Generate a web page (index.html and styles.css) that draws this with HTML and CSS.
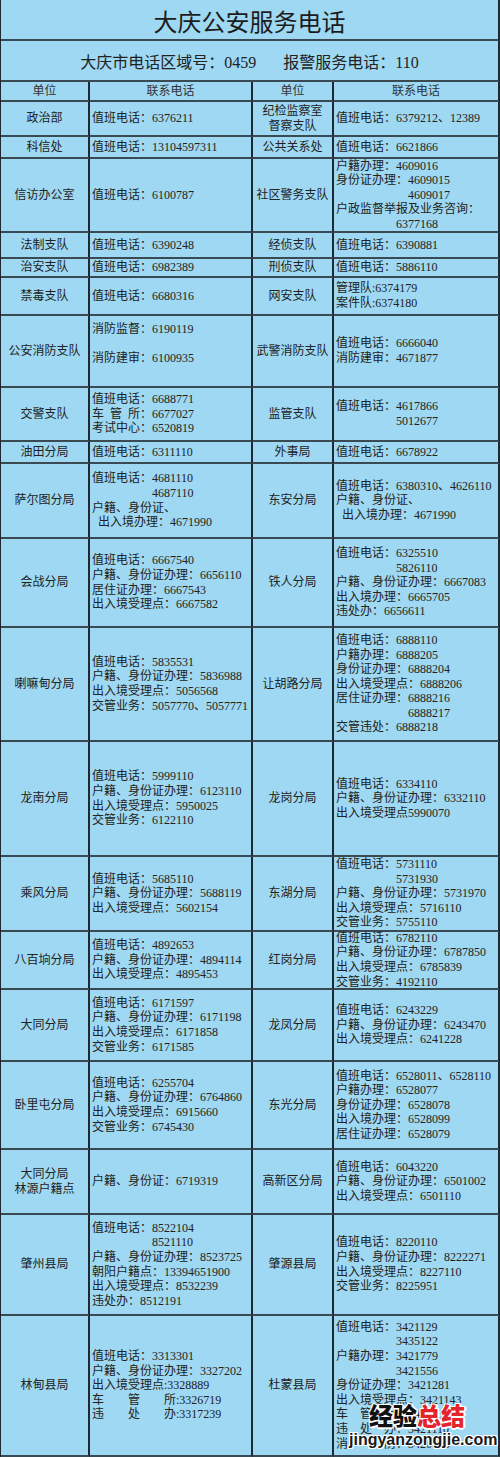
FILE: index.html
```html
<!DOCTYPE html>
<html lang="zh-CN">
<head>
<meta charset="utf-8">
<title>大庆公安服务电话</title>
<link rel="stylesheet" href="styles.css">
</head>
<body>
<div class="sheet">
  <div class="title">大庆公安服务电话</div>
  <div class="subtitle">大庆市电话区域号：0459<span class="gap"></span>报警服务电话：110</div>
  <div class="grid">
    <div class="c m hd">单位</div>
    <div class="c m hd">联系电话</div>
    <div class="c m hd">单位</div>
    <div class="c m hd">联系电话</div>

    <div class="c m">政治部</div>
    <div class="c t"><div>值班电话：6376211</div></div>
    <div class="c m"><div>纪检监察室</div><div>督察支队</div></div>
    <div class="c t"><div>值班电话：6379212、12389</div></div>

    <div class="c m">科信处</div>
    <div class="c t"><div>值班电话：13104597311</div></div>
    <div class="c m">公共关系处</div>
    <div class="c t"><div>值班电话：6621866</div></div>

    <div class="c m">信访办公室</div>
    <div class="c t"><div>值班电话：6100787</div></div>
    <div class="c m">社区警务支队</div>
    <div class="c t">
      <div>户籍办理：4609016</div>
      <div>身份证办理：4609015</div>
      <div class="i72">4609017</div>
      <div>户政监督举报及业务咨询：</div>
      <div class="i60">6377168</div>
    </div>

    <div class="c m">法制支队</div>
    <div class="c t"><div>值班电话：6390248</div></div>
    <div class="c m">经侦支队</div>
    <div class="c t"><div>值班电话：6390881</div></div>

    <div class="c m">治安支队</div>
    <div class="c t"><div>值班电话：6982389</div></div>
    <div class="c m">刑侦支队</div>
    <div class="c t"><div>值班电话：5886110</div></div>

    <div class="c m">禁毒支队</div>
    <div class="c t"><div>值班电话：6680316</div></div>
    <div class="c m">网安支队</div>
    <div class="c t"><div>管理队:6374179</div><div>案件队:6374180</div></div>

    <div class="c m">公安消防支队</div>
    <div class="c t">
      <div>消防监督：6190119</div>
      <div>&nbsp;</div>
      <div>消防建审：6100935</div>
      <div>&nbsp;</div>
    </div>
    <div class="c m">武警消防支队</div>
    <div class="c t"><div>值班电话：6666040</div><div>消防建审：4671877</div></div>

    <div class="c m">交警支队</div>
    <div class="c t">
      <div>值班电话：6688771</div>
      <div>车&ensp;管&ensp;所：6677027</div>
      <div>考试中心：6520819</div>
    </div>
    <div class="c m">监管支队</div>
    <div class="c t"><div>值班电话：4617866</div><div class="i60">5012677</div></div>

    <div class="c m">油田分局</div>
    <div class="c t"><div>值班电话：6311110</div></div>
    <div class="c m">外事局</div>
    <div class="c t"><div>值班电话：6678922</div></div>

    <div class="c m">萨尔图分局</div>
    <div class="c t">
      <div>值班电话：4681110</div>
      <div class="i60">4687110</div>
      <div>户籍、身份证、</div>
      <div class="i6">出入境办理：4671990</div>
    </div>
    <div class="c m">东安分局</div>
    <div class="c t">
      <div>值班电话：6380310、4626110</div>
      <div>户籍、身份证、</div>
      <div class="i6">出入境办理：4671990</div>
    </div>

    <div class="c m">会战分局</div>
    <div class="c t">
      <div>值班电话：6667540</div>
      <div>户籍、身份证办理：6656110</div>
      <div>居住证办理：6667543</div>
      <div>出入境受理点：6667582</div>
    </div>
    <div class="c m">铁人分局</div>
    <div class="c t">
      <div>值班电话：6325510</div>
      <div class="i60">5826110</div>
      <div>户籍、身份证办理：6667083</div>
      <div>出入境办理：6665705</div>
      <div>违处办：6656611</div>
    </div>

    <div class="c m">喇嘛甸分局</div>
    <div class="c t">
      <div>值班电话：5835531</div>
      <div>户籍、身份证办理：5836988</div>
      <div>出入境受理点：5056568</div>
      <div>交管业务：5057770、5057771</div>
    </div>
    <div class="c m">让胡路分局</div>
    <div class="c t">
      <div>值班电话：6888110</div>
      <div>户籍办理：6888205</div>
      <div>身份证办理：6888204</div>
      <div>出入境受理点：6888206</div>
      <div>居住证办理：6888216</div>
      <div class="i72">6888217</div>
      <div>交管违处：6888218</div>
    </div>

    <div class="c m">龙南分局</div>
    <div class="c t">
      <div>值班电话：5999110</div>
      <div>户籍、身份证办理：6123110</div>
      <div>出入境受理点：5950025</div>
      <div>交管业务：6122110</div>
    </div>
    <div class="c m">龙岗分局</div>
    <div class="c t">
      <div>值班电话：6334110</div>
      <div>户籍、身份证办理：6332110</div>
      <div>出入境受理点5990070</div>
    </div>

    <div class="c m">乘风分局</div>
    <div class="c t">
      <div>值班电话：5685110</div>
      <div>户籍、身份证办理：5688119</div>
      <div>出入境受理点：5602154</div>
    </div>
    <div class="c m">东湖分局</div>
    <div class="c t">
      <div>值班电话：5731110</div>
      <div class="i60">5731930</div>
      <div>户籍、身份证办理：5731970</div>
      <div>出入境受理点：5716110</div>
      <div>交管业务：5755110</div>
    </div>

    <div class="c m">八百垧分局</div>
    <div class="c t">
      <div>值班电话：4892653</div>
      <div>户籍、身份证办理：4894114</div>
      <div>出入境受理点：4895453</div>
    </div>
    <div class="c m">红岗分局</div>
    <div class="c t">
      <div>值班电话：6782110</div>
      <div>户籍、身份证办理：6787850</div>
      <div>出入境受理点：6785839</div>
      <div>交管业务：4192110</div>
    </div>

    <div class="c m">大同分局</div>
    <div class="c t">
      <div>值班电话：6171597</div>
      <div>户籍、身份证办理：6171198</div>
      <div>出入境受理点：6171858</div>
      <div>交管业务：6171585</div>
    </div>
    <div class="c m">龙凤分局</div>
    <div class="c t">
      <div>值班电话：6243229</div>
      <div>户籍、身份证办理：6243470</div>
      <div>出入境受理点：6241228</div>
    </div>

    <div class="c m">卧里屯分局</div>
    <div class="c t">
      <div>值班电话：6255704</div>
      <div>户籍、身份证办理：6764860</div>
      <div>出入境受理点：6915660</div>
      <div>交管业务：6745430</div>
    </div>
    <div class="c m">东光分局</div>
    <div class="c t">
      <div>值班电话：6528011、6528110</div>
      <div>户籍办理：6528077</div>
      <div>身份证办理：6528078</div>
      <div>出入境办理：6528099</div>
      <div>居住证办理：6528079</div>
    </div>

    <div class="c m"><div>大同分局</div><div>林源户籍点</div></div>
    <div class="c t"><div>户籍、身份证：6719319</div></div>
    <div class="c m">高新区分局</div>
    <div class="c t">
      <div>值班电话：6043220</div>
      <div>户籍、身份证办理：6501002</div>
      <div>出入境受理点：6501110</div>
    </div>

    <div class="c m">肇州县局</div>
    <div class="c t">
      <div>值班电话：8522104</div>
      <div class="i60">8521110</div>
      <div>户籍、身份证办理：8523725</div>
      <div>朝阳户籍点：13394651900</div>
      <div>出入境受理点：8532239</div>
      <div>违处办：8512191</div>
    </div>
    <div class="c m">肇源县局</div>
    <div class="c t">
      <div>值班电话：8220110</div>
      <div>户籍、身份证办理：8222271</div>
      <div>出入境受理点：8227110</div>
      <div>交管业务：8225951</div>
    </div>

    <div class="c m">林甸县局</div>
    <div class="c t">
      <div>值班电话：3313301</div>
      <div>户籍、身份证办理：3327202</div>
      <div>出入境受理点:3328889</div>
      <div>车　　管　　所:3326719</div>
      <div>违　　处　　办:3317239</div>
    </div>
    <div class="c m">杜蒙县局</div>
    <div class="c t">
      <div>值班电话：3421129</div>
      <div class="i60">3435122</div>
      <div>户籍办理：3421779</div>
      <div class="i60">3421556</div>
      <div>身份证办理：3421281</div>
      <div>出入境受理点：3421143</div>
      <div>车　管　所：3421136</div>
      <div>违　处　办：3421110</div>
      <div>消　　　防：3420915</div>
    </div>
  </div>
  <div class="watermark">
    <div class="wm-cn"><span class="wm-black">经验</span><span class="wm-red">总结</span></div>
    <div class="wm-en">jingyanzongjie.com</div>
  </div>
</div>
</body>
</html>
```

FILE: styles.css
```css
html, body {
  margin: 0;
  padding: 0;
  background: #9ed8f2;
}

.sheet {
  position: relative;
  width: 500px;
  height: 1457px;
  box-sizing: border-box;
  border-left: 1px solid #1e2a30;
  background: #9ed8f2;
  color: #222;
  font-family: "Liberation Serif", "Noto Sans CJK SC", serif;
  font-size: 12px;
  overflow: hidden;
}

.title {
  height: 41px;
  box-sizing: border-box;
  border-bottom: 2px solid #3a4a52;
  border-right: 2px solid #1e2a30;
  display: flex;
  align-items: center;
  justify-content: center;
  font-size: 24px;
  color: #1c1c1c;
  padding-top: 1px;
}

.subtitle {
  height: 41px;
  box-sizing: border-box;
  border-bottom: 2px solid #3a4a52;
  border-right: 2px solid #1e2a30;
  display: flex;
  align-items: center;
  justify-content: center;
  font-size: 16px;
  color: #222;
}

.gap {
  display: inline-block;
  width: 27px;
}

.grid {
  display: grid;
  grid-template-columns: 89px 163px 81px 166px;
  grid-template-rows: 20px 35px 22px 74px 26px 19px 38px 72px 54px 22px 75px 89px 114px 115px 75px 58px 72px 88px 65px 101px 141px;
}

.c {
  box-sizing: border-box;
  border-right: 2px solid #1e2a30;
  border-bottom: 2px solid #3a4a52;
  display: flex;
  flex-direction: column;
  justify-content: center;
  line-height: 14.6px;
  white-space: nowrap;
  overflow: visible;
}

.m {
  align-items: center;
  text-align: center;
}

.t {
  padding-left: 2px;
}

.hd {
  color: #333;
}

.i60 { padding-left: 60px; }
.i72 { padding-left: 72px; }
.i6 { padding-left: 6px; }

.watermark {
  position: absolute;
  left: 348px;
  top: 1400px;
  width: 152px;
}

.wm-cn {
  padding-left: 20px;
  font-family: "Noto Sans CJK SC", sans-serif;
  font-weight: 900;
  font-size: 24px;
  line-height: 30px;
  text-shadow: 1px 1px 0 #fff, -1px -1px 0 #fff, 1px -1px 0 #fff, -1px 1px 0 #fff, 0 2px 0 #fff, 2px 0 0 #fff;
}

.wm-black { color: #111; }
.wm-red { color: #e3262d; }

.wm-en {
  font-family: "Liberation Sans", Arial, sans-serif;
  font-weight: bold;
  font-size: 16px;
  line-height: 20px;
  color: #1a1a1a;
  text-shadow: 1px 1px 0 #fff, -1px -1px 0 #fff, 1px -1px 0 #fff, -1px 1px 0 #fff, 0 1px 0 #fff, 1px 0 0 #fff, 0 -1px 0 #fff, -1px 0 0 #fff;
}
```
